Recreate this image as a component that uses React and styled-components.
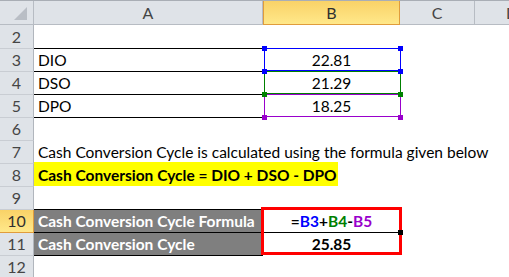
import React from 'react'
import styled, { createGlobalStyle } from 'styled-components'

const GlobalStyle = createGlobalStyle`
  html, body {
    margin: 0;
    padding: 0;
    background: #ffffff;
  }
`

const Sheet = styled.div`
  width: 509px;
  height: 277px;
  overflow: hidden;
  display: grid;
  grid-template-columns: 34px 229px 137px 75px 75px;
  grid-template-rows: 24px 24px repeat(10, 23px);
  border-top: 1px solid #a9aeb5;
  box-sizing: border-box;
  font-family: Lato, 'Open Sans', sans-serif;
  font-size: 15.5px;
  color: #000;
`

const Corner = styled.div`
  position: relative;
  background: #dfe3e8;
  border-right: 1px solid #b7bcc3;
  border-bottom: 1px solid #b7bcc3;
  svg {
    position: absolute;
    right: 6px;
    bottom: 4px;
  }
`

const ColHead = styled.div`
  display: flex;
  align-items: flex-end;
  justify-content: center;
  padding-bottom: 3px;
  overflow: hidden;
  color: ${p => (p.$active ? '#2f2f2f' : '#454545')};
  background: ${p => (p.$active ? 'linear-gradient(#f9d267, #ffe88a)' : '#dfe3e8')};
  border-right: 1px solid ${p => (p.$active ? '#e09c3c' : '#b7bcc3')};
  border-left: ${p => (p.$active ? '1px solid #e09c3c' : 'none')};
  border-bottom: 1px solid ${p => (p.$active ? '#e09c3c' : '#b7bcc3')};
  line-height: 1;
  font-size: 16px;
  box-sizing: border-box;
  white-space: nowrap;
`

const RowHead = styled.div`
  display: flex;
  align-items: flex-end;
  justify-content: center;
  padding-bottom: 3px;
  box-sizing: border-box;
  line-height: 1;
  font-size: 16px;
  color: ${p => (p.$active ? '#2f2f2f' : '#454545')};
  background: ${p => (p.$active ? 'linear-gradient(#f9d267, #ffe88a)' : '#dfe3e8')};
  border-right: 1px solid ${p => (p.$active ? '#e09c3c' : '#b1b6bd')};
  border-bottom: 1px solid ${p => (p.$active ? '#e09c3c' : '#c9cdd3')};
`

const Cell = styled.div`
  position: relative;
  display: flex;
  align-items: flex-end;
  justify-content: ${p => (p.$center ? 'center' : 'flex-start')};
  padding: 0 0 3px ${p => (p.$center ? '0' : '4px')};
  box-sizing: border-box;
  line-height: 1;
  white-space: nowrap;
  font-weight: ${p => (p.$bold ? 700 : 400)};
  color: ${p => (p.$dark ? '#ffffff' : '#000000')};
  background: ${p => (p.$dark ? '#7f7f7f' : 'transparent')};
  border-bottom: 1px solid ${p => (p.$under ? '#000000' : 'transparent')};
  grid-column: ${p => p.$span || 'auto'};
`

const Highlight = styled.span`
  display: flex;
  align-items: flex-end;
  width: 304px;
  height: 24px;
  margin: -1px 0 -3px -4px;
  padding: 0 0 3px 4px;
  box-sizing: border-box;
  background: #ffff00;
  font-weight: 700;
`

const RangeFrame = styled.div`
  position: absolute;
  top: -1px;
  left: 1px;
  right: -1px;
  bottom: 0;
  border: 1px solid ${p => p.$color};
  z-index: ${p => p.$z};
  pointer-events: none;
`

const Handle = styled.div`
  position: absolute;
  width: 5px;
  height: 5px;
  background: ${p => p.$color};
  z-index: ${p => p.$z + 1};
`

const SelectFrame = styled.div`
  position: absolute;
  top: -3px;
  left: -2px;
  right: -2px;
  bottom: -23px;
  border: 3px solid #ff0000;
  z-index: 5;
`

const FillHandle = styled.div`
  position: absolute;
  left: 135px;
  top: 20px;
  width: 5px;
  height: 5px;
  background: #000;
  z-index: 6;
`

const Ref = styled.span`
  color: ${p => p.$color};
`

const BLUE = '#0000ff'
const GREEN = '#008000'
const PURPLE = '#9900cc'

const Ranged = ({ color, z, children }) => (
  <Cell $center>
    {children}
    <RangeFrame $color={color} $z={z} />
    <Handle $color={color} $z={z} style={{ left: -1, top: -3 }} />
    <Handle $color={color} $z={z} style={{ left: 135, top: -3 }} />
    <Handle $color={color} $z={z} style={{ left: -1, top: 20 }} />
    <Handle $color={color} $z={z} style={{ left: 135, top: 20 }} />
  </Cell>
)

const Blank = ({ n = 3 }) => Array.from({ length: n }, (_, i) => <Cell key={i} />)

export default function App() {
  return (
    <>
      <GlobalStyle />
      <Sheet>
        <Corner>
          <svg width="13" height="13" viewBox="0 0 13 13">
            <polygon points="13,0 13,13 0,13" fill="#b9bec5" />
          </svg>
        </Corner>
        <ColHead>A</ColHead>
        <ColHead $active>B</ColHead>
        <ColHead>C</ColHead>
        <ColHead>D</ColHead>

        <RowHead>2</RowHead>
        <Cell $under />
        <Blank />

        <RowHead>3</RowHead>
        <Cell $under>DIO</Cell>
        <Ranged color={BLUE} z={4}>22.81</Ranged>
        <Blank n={2} />

        <RowHead>4</RowHead>
        <Cell $under>DSO</Cell>
        <Ranged color={GREEN} z={3}>21.29</Ranged>
        <Blank n={2} />

        <RowHead>5</RowHead>
        <Cell $under>DPO</Cell>
        <Ranged color={PURPLE} z={2}>18.25</Ranged>
        <Blank n={2} />

        <RowHead>6</RowHead>
        <Blank n={4} />

        <RowHead>7</RowHead>
        <Cell $span="2 / -1">Cash Conversion Cycle is calculated using the formula given below</Cell>

        <RowHead>8</RowHead>
        <Cell $span="2 / -1">
          <Highlight>Cash Conversion Cycle = DIO + DSO - DPO</Highlight>
        </Cell>

        <RowHead>9</RowHead>
        <Cell $under />
        <Blank />

        <RowHead $active>10</RowHead>
        <Cell $dark $bold $under>Cash Conversion Cycle Formula</Cell>
        <Cell $center $bold $under>
          <span>
            =<Ref $color={BLUE}>B3</Ref>+<Ref $color={GREEN}>B4</Ref>-<Ref $color={PURPLE}>B5</Ref>
          </span>
          <SelectFrame />
          <FillHandle />
        </Cell>
        <Blank n={2} />

        <RowHead>11</RowHead>
        <Cell $dark $bold $under>Cash Conversion Cycle</Cell>
        <Cell $center $bold>25.85</Cell>
        <Blank n={2} />

        <RowHead>12</RowHead>
        <Blank n={4} />
      </Sheet>
    </>
  )
}
